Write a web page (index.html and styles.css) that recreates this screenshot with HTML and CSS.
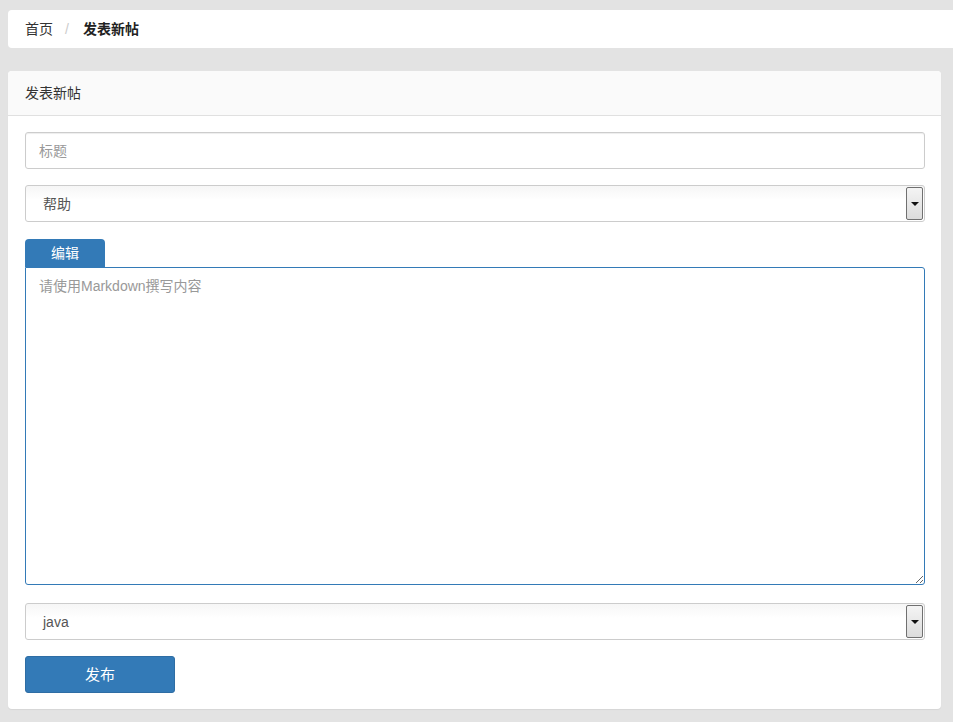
FILE: index.html
```html
<!DOCTYPE html>
<html lang="zh-CN">
<head>
<meta charset="utf-8">
<title>发表新帖</title>
<link rel="stylesheet" href="styles.css">
</head>
<body>
<ol class="breadcrumb">
  <li class="crumb"><a href="#">首页</a></li>
  <li class="crumb-sep">/</li>
  <li class="crumb active">发表新帖</li>
</ol>
<div class="panel">
  <div class="panel-heading">发表新帖</div>
  <form class="panel-body">
    <input class="field" type="text" placeholder="标题">
    <div class="select">
      <span class="select-value">帮助</span>
      <span class="select-arrow"><span class="tri"></span></span>
    </div>
    <div class="editor">
      <div class="tabs"><span class="tab">编辑</span></div>
      <textarea class="area" placeholder="请使用Markdown撰写内容"></textarea>
    </div>
    <div class="select">
      <span class="select-value">java</span>
      <span class="select-arrow"><span class="tri"></span></span>
    </div>
    <button class="btn" type="button">发布</button>
  </form>
</div>
</body>
</html>
```
FILE: styles.css
```css
html { overflow-x: hidden; }
body {
  margin: 0;
  padding: 10px 12px 13px 8px;
  background: #e3e3e3;
  font-family: "Liberation Sans", "Noto Sans CJK SC", sans-serif;
  font-size: 14px;
  line-height: 20px;
  color: #333;
}
.breadcrumb {
  list-style: none;
  margin: 0 -40px 23px 0;
  padding: 9px 17px 9px 17px;
  background: #fff;
  border-radius: 4px;
  display: flex;
  align-items: center;
}
.crumb a { color: #333; text-decoration: none; }
.crumb-sep { color: #ccc; padding: 0 14px 0 12px; }
.crumb.active { font-weight: bold; color: #222; }

.panel {
  background: #fff;
  border-radius: 4px;
  box-shadow: 0 1px 1px rgba(0,0,0,0.06);
  overflow: hidden;
}
.panel-heading {
  background: #fafafa;
  border-bottom: 1px solid #e0e0e0;
  padding: 12px 17px;
  color: #333;
}
.panel-body {
  padding: 16px 16px 16px 17px;
  display: flex;
  flex-direction: column;
  gap: 16px;
  margin: 0;
}
.field {
  box-sizing: border-box;
  height: 37px;
  border: 1px solid #ccc;
  border-radius: 3px;
  padding: 6px 13px;
  font: inherit;
  color: #555;
  box-shadow: inset 0 1px 1px rgba(0,0,0,0.075);
  outline: none;
}
.field::placeholder, .area::placeholder { color: #999; }
.select {
  box-sizing: border-box;
  height: 37px;
  border: 1px solid #ccc;
  border-radius: 3px;
  display: flex;
  align-items: center;
  padding: 1px 1px 1px 17px;
  color: #555;
  background: linear-gradient(#f6f6f6, #fff 40%);
}
.select-value { flex: 1; }
.select-arrow {
  box-sizing: border-box;
  width: 17px;
  height: 100%;
  border: 1px solid #707070;
  border-radius: 2px;
  background: linear-gradient(#f4f4f4, #dcdcdc);
  display: flex;
  align-items: center;
  justify-content: center;
}
.tri {
  width: 0;
  height: 0;
  border-left: 4px solid transparent;
  border-right: 4px solid transparent;
  border-top: 4px solid #111;
}
.editor { display: flex; flex-direction: column; margin: 1px 0 2px; }
.tabs { display: flex; }
.tab {
  width: 80px;
  height: 28px;
  line-height: 29px;
  text-align: center;
  background: #337ab7;
  color: #fff;
  border-radius: 4px 4px 0 0;
  font-size: 14px;
}
.area {
  box-sizing: border-box;
  height: 318px;
  border: 1px solid #337ab7;
  border-radius: 0 3px 3px 3px;
  padding: 8px 13px;
  font: inherit;
  color: #555;
  resize: vertical;
  outline: none;
}
.btn {
  align-self: flex-start;
  width: 150px;
  height: 37px;
  background: #337ab7;
  border: 1px solid #2e6da4;
  border-radius: 3px;
  color: #fff;
  font: inherit;
  font-size: 15px;
  cursor: pointer;
}
```
